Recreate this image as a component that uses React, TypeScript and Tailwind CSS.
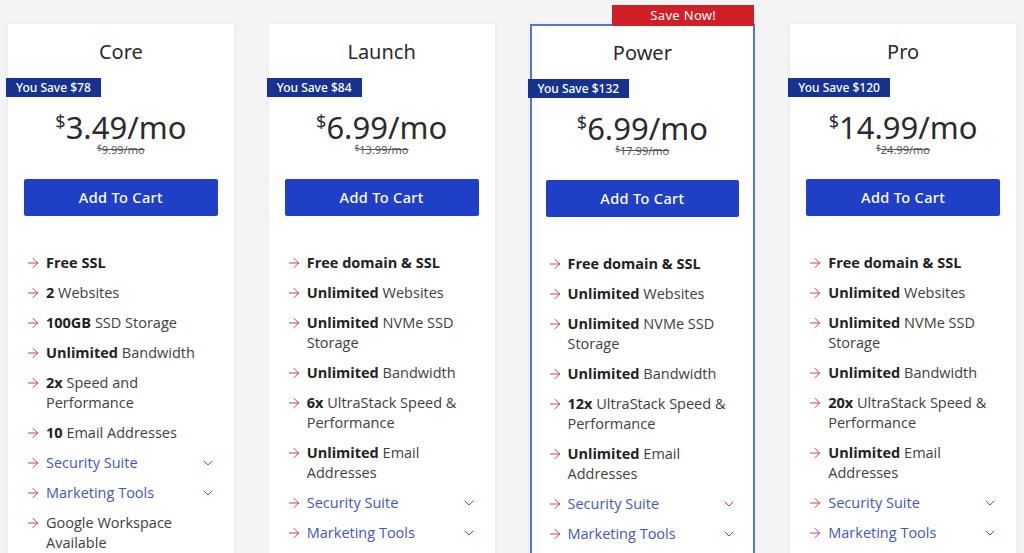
import { ArrowRight, ChevronDown } from "lucide-react";

type Feature = {
  bold?: string;
  text?: string;
  link?: boolean;
};

type Plan = {
  name: string;
  save: string;
  price: string;
  old: string;
  featured?: boolean;
  features: Feature[];
};

const heading = { fontFamily: '"Noto Sans", "Open Sans", sans-serif' };
const body = { fontFamily: '"Open Sans", "Noto Sans", sans-serif' };

const tail = (speed: string): Feature[] => [
  { bold: "Free domain & SSL" },
  { bold: "Unlimited", text: "Websites" },
  { bold: "Unlimited", text: "NVMe SSD Storage" },
  { bold: "Unlimited", text: "Bandwidth" },
  { bold: speed, text: "UltraStack Speed & Performance" },
  { bold: "Unlimited", text: "Email Addresses" },
  { text: "Security Suite", link: true },
  { text: "Marketing Tools", link: true },
];

const plans: Plan[] = [
  {
    name: "Core",
    save: "You Save $78",
    price: "3.49",
    old: "9.99",
    features: [
      { bold: "Free SSL" },
      { bold: "2", text: "Websites" },
      { bold: "100GB", text: "SSD Storage" },
      { bold: "Unlimited", text: "Bandwidth" },
      { bold: "2x", text: "Speed and Performance" },
      { bold: "10", text: "Email Addresses" },
      { text: "Security Suite", link: true },
      { text: "Marketing Tools", link: true },
      { text: "Google Workspace Available" },
    ],
  },
  { name: "Launch", save: "You Save $84", price: "6.99", old: "13.99", features: tail("6x") },
  { name: "Power", save: "You Save $132", price: "6.99", old: "17.99", featured: true, features: tail("12x") },
  { name: "Pro", save: "You Save $120", price: "14.99", old: "24.99", features: tail("20x") },
];

function FeatureRow({ f }: { f: Feature }) {
  return (
    <li className="flex items-start gap-[5px] text-[14.5px] leading-5 text-[#404040]" style={body}>
      <ArrowRight className="mt-[2px] h-4 w-4 shrink-0 text-[#c8344a]" strokeWidth={1.4} />
      <span className={f.link ? "flex-1 text-[#4356c2]" : "flex-1"}>
        {f.bold && <b className="font-bold text-[#222]">{f.bold}</b>}
        {f.bold && f.text ? " " : ""}
        {f.text}
      </span>
      {f.link && <ChevronDown className="mr-[-2px] mt-[2px] h-4 w-4 shrink-0 text-[#c8344a]" strokeWidth={1.5} />}
    </li>
  );
}

function PlanCard({ plan }: { plan: Plan }) {
  return (
    <div
      className={
        plan.featured
          ? "relative border-2 border-[#5a72cf] bg-white pb-10 shadow-[0_0_6px_rgba(0,0,0,0.04)]"
          : "relative bg-white pb-10 shadow-[0_0_6px_rgba(0,0,0,0.05)]"
      }
    >
      {plan.featured && (
        <div
          className="absolute -top-[21px] right-[-1px] flex h-[21px] w-[142px] items-center justify-center bg-[#d01f26] text-[13px] tracking-wide text-white"
          style={heading}
        >
          Save Now!
        </div>
      )}
      <div className={plan.featured ? "-mx-[2px] -mt-[1px] flex flex-col" : "flex flex-col"}>
        <h3 className="mt-[14px] text-center text-[20px] leading-7 text-[#2b2b2b]" style={heading}>
          {plan.name}
        </h3>
        <div
          className="-ml-[2px] mt-[12px] flex h-[19px] w-fit items-center bg-[#16338f] px-[10px] text-[12px] font-medium text-white"
          style={heading}
        >
          {plan.save}
        </div>
        <div className="mt-[12px] flex justify-center text-[#2b2b2b]" style={heading}>
          <span className="mt-[2px] text-[18px] leading-5">$</span>
          <span className="text-[31px] leading-[36px]">{plan.price}/mo</span>
        </div>
        <div className="-mt-[3px] flex justify-center text-[11px] leading-4 text-[#555] line-through" style={heading}>
          <span className="text-[8px] leading-3">$</span>
          {plan.old}/mo
        </div>
        <div className="mx-4 mt-[21px]">
          <button
            className="flex h-[37px] w-full items-center justify-center rounded-[2px] bg-[#1f3fc6] text-[14.5px] font-medium tracking-wide text-white"
            style={heading}
          >
            Add To Cart
          </button>
        </div>
        <ul className="ml-[17px] mr-5 mt-[37px] flex flex-col gap-[10px]">
          {plan.features.map((f, i) => (
            <FeatureRow key={i} f={f} />
          ))}
        </ul>
      </div>
    </div>
  );
}

export default function App() {
  return (
    <div className="h-[553px] overflow-hidden bg-[#f4f4f4]">
      <div className="grid grid-cols-4 items-start gap-[35px] px-2 pt-6">
        {plans.map((p) => (
          <PlanCard key={p.name} plan={p} />
        ))}
      </div>
    </div>
  );
}
